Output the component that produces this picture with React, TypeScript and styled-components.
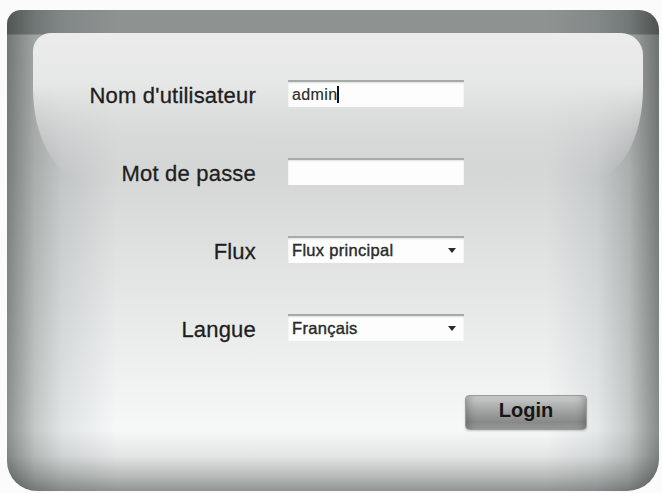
import React from "react";
import styled, { createGlobalStyle } from "styled-components";

const Global = createGlobalStyle`
  html, body { margin: 0; padding: 0; background: #fbfbfb; }
  body { font-family: "Liberation Sans", Arial, sans-serif; }
`;

const Panel = styled.div`
  position: relative;
  margin: 10px 0 0 7px;
  width: 652px;
  height: 481px;
  border-radius: 14px 20px 32px 30px;
  overflow: hidden;
  background-image:
    linear-gradient(to right, #8f9493 0px, #a6aaa9 10px, #cbcecd 28px, #e8eaea 55px, #ffffff 110px, #ffffff 540px, #eceeee 590px, #cdd0cf 622px, #9ea2a1 643px, #8a8f8e 652px),
    linear-gradient(to bottom, #8e9392 0px, #8e9392 24px, #c9cccb 25px, #d3d5d5 150px, #e2e4e4 260px, #f2f4f4 385px, #f7f9f9 420px, #e3e5e5 446px, #b5b9b8 467px, #8f9493 481px);
  background-blend-mode: multiply;

  &::before {
    content: "";
    position: absolute;
    top: 23px;
    left: 26px;
    right: 16px;
    height: 145px;
    border-radius: 18px 22px 50px 50px / 18px 22px 90px 90px;
    background: linear-gradient(to bottom, #ececec 0%, #e6e7e7 35%, rgba(222, 224, 224, 0.55) 68%, rgba(215, 217, 217, 0) 100%);
  }
`;

const Form = styled.form`
  position: relative;
  z-index: 1;
  display: grid;
  grid-template-columns: 249px 176px;
  grid-auto-rows: 27px;
  column-gap: 32px;
  row-gap: 51px;
  padding-top: 70px;
  margin: 0;
`;

const Label = styled.label`
  justify-self: end;
  align-self: center;
  padding-top: 4px;
  font-size: 22px;
  letter-spacing: 0.2px;
  color: #1e1e1e;
  -webkit-text-stroke: 0.3px #1e1e1e;
  white-space: nowrap;
`;

const Field = styled.div`
  box-sizing: border-box;
  height: 27px;
  background: #fdfdfd;
  border-top: 2px solid #a7aaaa;
  box-shadow: inset 0 1px 2px rgba(0, 0, 0, 0.12);
  display: flex;
  align-items: center;
  padding-left: 4px;
  font-size: 16px;
  letter-spacing: 0.4px;
  color: #2e2e2e;
  -webkit-text-stroke: 0.2px #2e2e2e;
`;

const Caret = styled.span`
  display: inline-block;
  width: 2px;
  height: 17px;
  margin-left: -1px;
  background: #111;
`;

const Select = styled(Field)`
  justify-content: space-between;
  padding-right: 8px;
  font-size: 16.5px;
  letter-spacing: 0.3px;
  color: #2a2a2a;
  -webkit-text-stroke: 0.4px #2a2a2a;
`;

const Arrow = styled.span`
  width: 0;
  height: 0;
  border-left: 4px solid transparent;
  border-right: 4px solid transparent;
  border-top: 5px solid #2a2a2a;
`;

const ButtonRow = styled.div`
  position: relative;
  z-index: 1;
  display: flex;
  padding-left: 458px;
  margin-top: 54px;
`;

const LoginButton = styled.button`
  width: 122px;
  height: 35px;
  border: 1px solid #9a9b9b;
  border-radius: 4px;
  background: linear-gradient(to bottom, #d3d4d4 0%, #b6b7b7 22%, #9e9f9f 50%, #878888 80%, #a0a1a1 100%);
  box-shadow: inset 6px 0 8px -4px rgba(0,0,0,0.25), inset -6px 0 8px -4px rgba(0,0,0,0.25), 0 1px 2px rgba(0,0,0,0.2);
  font-family: "Liberation Sans", Arial, sans-serif;
  font-size: 20px;
  font-weight: bold;
  color: #161616;
  padding: 0 0 4px 0;
  cursor: pointer;
`;

export default function App() {
  return (
    <>
      <Global />
      <Panel>
        <Form onSubmit={(e) => e.preventDefault()}>
          <Label>Nom d'utilisateur</Label>
          <Field role="textbox">admin<Caret /></Field>
          <Label>Mot de passe</Label>
          <Field role="textbox" />
          <Label>Flux</Label>
          <Select role="listbox">
            <span>Flux principal</span>
            <Arrow />
          </Select>
          <Label>Langue</Label>
          <Select role="listbox">
            <span>Français</span>
            <Arrow />
          </Select>
        </Form>
        <ButtonRow>
          <LoginButton type="button">Login</LoginButton>
        </ButtonRow>
      </Panel>
    </>
  );
}
